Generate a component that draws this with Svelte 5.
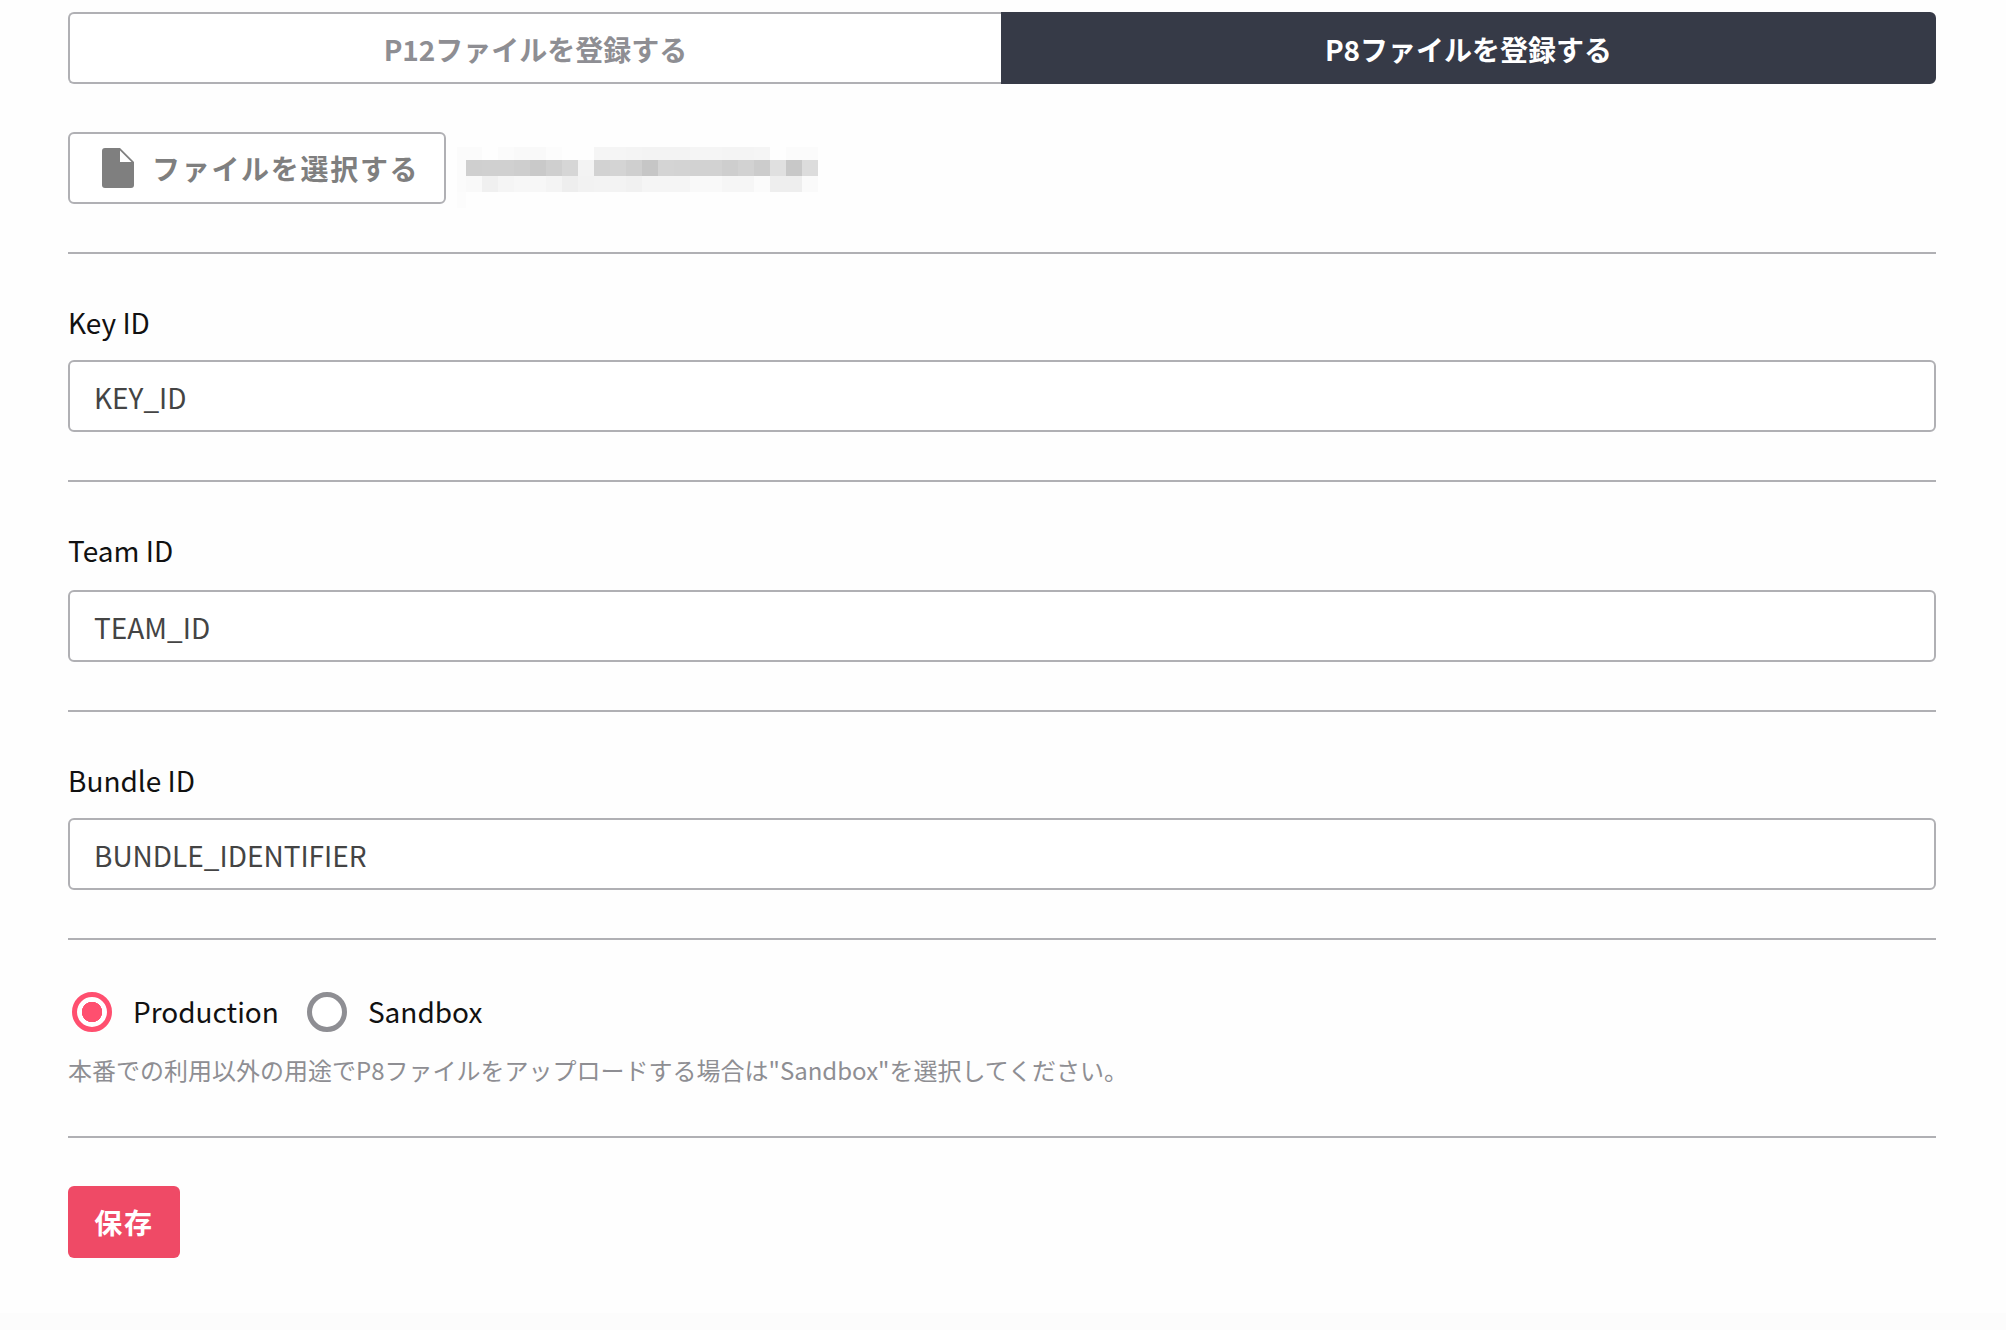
<script>
  const rows = [
    { h: 13, cells: ['fb','fb','fe','fb','f9','f9','fc','fe','fe','f5','f5','f4','f3','f3','f3','f5','f5','f4','f4','f5','fe','fb','fb'] },
    { h: 16, cells: ['fb','cf','d0','d0','ce','c9','cf','d6','f3','d2','d4','cf','c6','d4','d3','d2','d2','ce','d2','cc','e0','c8','dc'] },
    { h: 16, cells: ['fb','f9','f0','f5','f7','f7','f4','ee','f2','f3','f3','f1','f5','f5','f5','f9','f9','f6','f6','fb','ee','ee','fa'] },
    { h: 16, cells: ['fc'] }
  ];
  const fields = [
    { label: 'Key ID', value: 'KEY_ID', wide: false },
    { label: 'Team ID', value: 'TEAM_ID', wide: true },
    { label: 'Bundle ID', value: 'BUNDLE_IDENTIFIER', wide: false }
  ];
</script>

<main class="page">
  <div class="tabs">
    <button class="tab off"><span>P12ファイルを登録する</span></button>
    <button class="tab on"><span>P8ファイルを登録する</span></button>
  </div>

  <div class="file-row">
    <button class="file-btn">
      <svg width="32" height="40" viewBox="0 0 32 40" aria-hidden="true">
        <path fill="#7f7f7f" d="M3 0H18L32 14V37a3 3 0 0 1-3 3H3a3 3 0 0 1-3-3V3a3 3 0 0 1 3-3Z"/>
        <path fill="#fff" d="M18 2.5V14H29.5Z"/>
      </svg>
      <span>ファイルを選択する</span>
    </button>
    <div class="blur">
      {#each rows as row}
        <div class="blur-row">
          {#each row.cells as c}
            <i style="background:#{c}{c}{c};height:{row.h}px"></i>
          {/each}
        </div>
      {/each}
    </div>
  </div>

  <hr />

  {#each fields as f}
    <label class="field" class:wide={f.wide}>
      <span class="label">{f.label}</span>
      <input type="text" value={f.value} />
    </label>
    <hr />
  {/each}

  <div class="radios">
    <label class="radio"><input type="radio" name="env" checked /><span>Production</span></label>
    <label class="radio"><input type="radio" name="env" /><span>Sandbox</span></label>
  </div>
  <p class="help">本番での利用以外の用途でP8ファイルをアップロードする場合は"Sandbox"を選択してください。</p>
  <hr />

  <button class="save">保存</button>
</main>

<style>
  :global(body) {
    margin: 0;
    background: #fcfcfc;
    font-family: "Noto Sans CJK JP", "Noto Sans", sans-serif;
  }
  .page {
    display: block;
    box-sizing: border-box;
    height: 1313px;
    padding: 12px 70px 0 68px;
    background: #fefefe;
  }
  .tabs {
    display: flex;
    height: 72px;
  }
  .tab {
    flex: 1;
    font: 700 28px/1 "Noto Sans CJK JP", sans-serif;
    border: 2px solid #b0b0b4;
    padding: 2px 0 0;
  }
  .tab.off {
    background: #fff;
    color: #8e8e93;
    border-right: 0;
    border-radius: 6px 0 0 6px;
  }
  .tab.on {
    background: #363a47;
    border-color: #363a47;
    color: #fff;
    border-radius: 0 6px 6px 0;
  }
  .file-row {
    display: flex;
    margin-top: 48px;
    height: 72px;
  }
  .file-btn {
    display: flex;
    align-items: center;
    gap: 18px;
    box-sizing: border-box;
    width: 378px;
    padding: 0 0 0 32px;
    background: #fff;
    border: 2px solid #b0b0b4;
    border-radius: 6px;
    color: #7f7f7f;
    font: 700 28px/1 "Noto Sans CJK JP", sans-serif;
    letter-spacing: 1.7px;
  }
  .blur {
    margin: 15px 0 0 11px;
  }
  .blur-row {
    display: flex;
  }
  .blur-row i {
    display: block;
    width: 16px;
  }
  .blur-row i:first-child {
    width: 9px;
  }
  hr {
    border: 0;
    height: 2px;
    background: #b0b0b4;
    margin: 48px 0 0;
  }
  .field {
    display: block;
  }
  .label {
    display: block;
    margin-top: 47px;
    font-size: 28px;
    line-height: 42px;
    color: #111;
  }
  input[type="text"] {
    display: block;
    box-sizing: border-box;
    width: 100%;
    height: 72px;
    margin-top: 17px;
    padding: 1px 24px 0;
    background: #fff;
    border: 2px solid #b0b0b4;
    border-radius: 6px;
    color: #444;
    font: 400 28px "Noto Sans CJK JP", sans-serif;
  }
  .field.wide input[type="text"] {
    margin-top: 19px;
  }
  .radios {
    display: flex;
    gap: 28px;
    margin-top: 52px;
    padding-left: 4px;
  }
  .radio {
    display: flex;
    align-items: center;
    gap: 21px;
    font-size: 28px;
    color: #111;
    line-height: 38px;
  }
  .radio span {
    padding-bottom: 2px;
  }
  .radio input {
    appearance: none;
    box-sizing: border-box;
    width: 40px;
    height: 40px;
    margin: 0;
    border: 5px solid #8e8e93;
    border-radius: 50%;
    background: #fff;
  }
  .radio input:checked {
    border-color: #ff4f6f;
    background: radial-gradient(circle, #ff4f6f 0 10px, #fff 10.5px);
  }
  .help {
    margin: 20px 0 2px;
    font-size: 24px;
    line-height: 36px;
    color: #8e8e93;
  }
  .save {
    display: block;
    width: 112px;
    height: 72px;
    margin-top: 48px;
    padding: 0;
    background: #ef4a66;
    border: 0;
    border-radius: 6px;
    color: #fff;
    font: 700 28px/1 "Noto Sans CJK JP", sans-serif;
    letter-spacing: 1.7px;
  }
</style>
